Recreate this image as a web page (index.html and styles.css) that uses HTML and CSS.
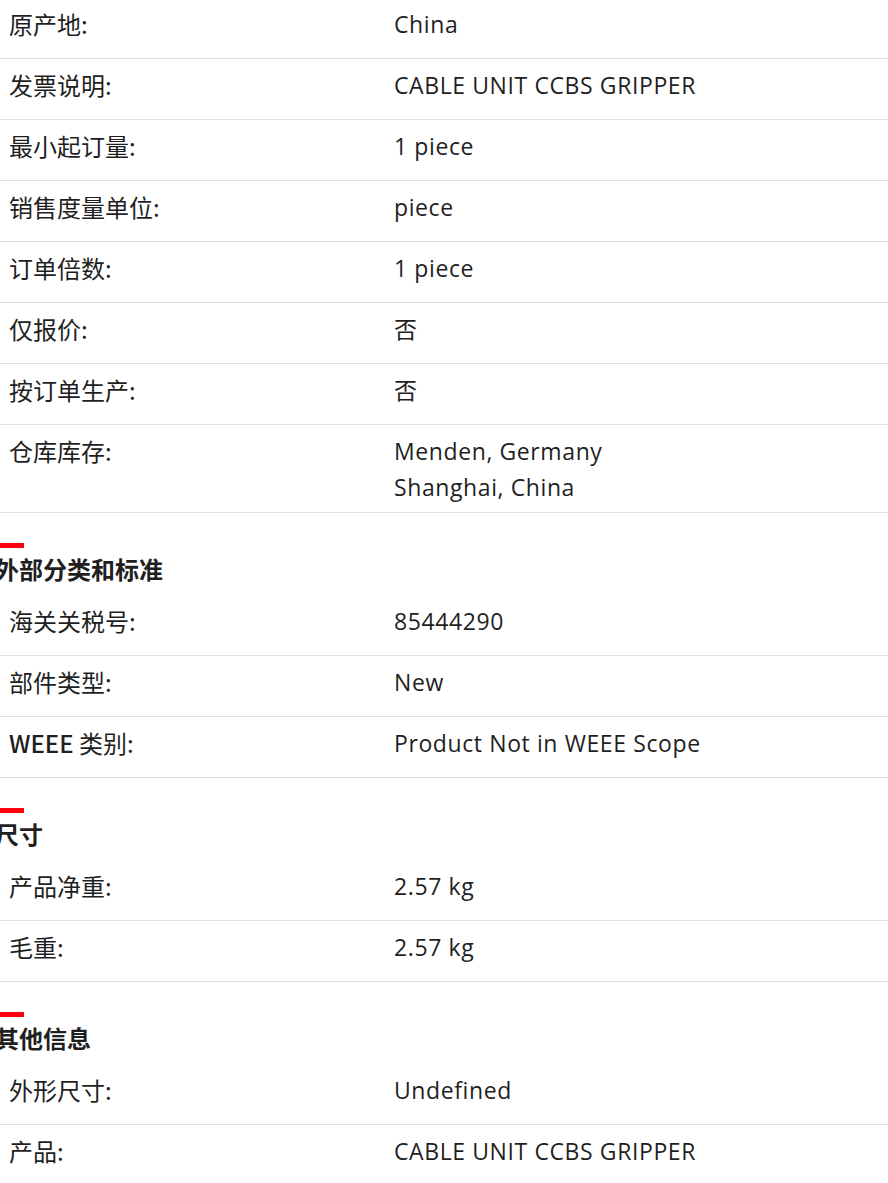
FILE: index.html
```html
<!DOCTYPE html>
<html lang="zh-CN">
<head>
<meta charset="utf-8">
<title>产品属性</title>
<link rel="stylesheet" href="styles.css">
</head>
<body>
<div class="page">
  <section class="group first">
    <div class="row"><div class="label">原产地:</div><div class="value">China</div></div>
    <div class="row"><div class="label">发票说明:</div><div class="value">CABLE UNIT CCBS GRIPPER</div></div>
    <div class="row"><div class="label">最小起订量:</div><div class="value">1 piece</div></div>
    <div class="row"><div class="label">销售度量单位:</div><div class="value">piece</div></div>
    <div class="row"><div class="label">订单倍数:</div><div class="value">1 piece</div></div>
    <div class="row"><div class="label">仅报价:</div><div class="value">否</div></div>
    <div class="row"><div class="label">按订单生产:</div><div class="value">否</div></div>
    <div class="row"><div class="label">仓库库存:</div><div class="value"><div>Menden, Germany</div><div>Shanghai, China</div></div></div>
  </section>

  <section class="group">
    <h2 class="group-title">外部分类和标准</h2>
    <div class="row"><div class="label">海关关税号:</div><div class="value">85444290</div></div>
    <div class="row"><div class="label">部件类型:</div><div class="value">New</div></div>
    <div class="row"><div class="label"><span class="latin">WEEE</span> 类别:</div><div class="value">Product Not in WEEE Scope</div></div>
  </section>

  <section class="group">
    <h2 class="group-title">尺寸</h2>
    <div class="row"><div class="label">产品净重:</div><div class="value">2.57 kg</div></div>
    <div class="row"><div class="label">毛重:</div><div class="value">2.57 kg</div></div>
  </section>

  <section class="group">
    <h2 class="group-title">其他信息</h2>
    <div class="row"><div class="label">外形尺寸:</div><div class="value">Undefined</div></div>
    <div class="row"><div class="label">产品:</div><div class="value">CABLE UNIT CCBS GRIPPER</div></div>
  </section>
</div>
</body>
</html>
```

FILE: styles.css
```css
html, body {
  margin: 0;
  padding: 0;
  background: #ffffff;
}

body {
  color: #1f1f1f;
  font-family: "Open Sans", "Noto Sans CJK SC", sans-serif;
  font-size: 22px;
}

.page {
  margin-top: -2px;
  width: 888px;
  overflow: hidden;
}

.group {
  display: flex;
  flex-direction: column;
}

.group-title {
  margin: 30px 0 10px -5px;
  padding-top: 10px;
  position: relative;
  font-family: "Noto Sans CJK SC", sans-serif;
  font-size: 24px;
  font-weight: 700;
  line-height: 32px;
  color: #1f1f1f;
}

.group-title::before {
  content: "";
  position: absolute;
  left: 5px;
  top: 0;
  width: 24px;
  height: 5px;
  background: #ff000f;
}

.row {
  display: grid;
  grid-template-columns: 394px 1fr;
  box-sizing: border-box;
  min-height: 61px;
  padding: 8px 0 7px;
  line-height: 36px;
  border-bottom: 1px solid #dfdfe3;
}

.label {
  padding-left: 9px;
  font-family: "Noto Sans CJK SC", sans-serif;
  font-size: 24px;
  color: #1f1f1f;
}

.label .latin {
  font-weight: 500;
}

.value {
  font-family: "Open Sans", "Noto Sans CJK SC", sans-serif;
  font-size: 23px;
  letter-spacing: 0.6px;
  color: #1f1f1f;
}
```
